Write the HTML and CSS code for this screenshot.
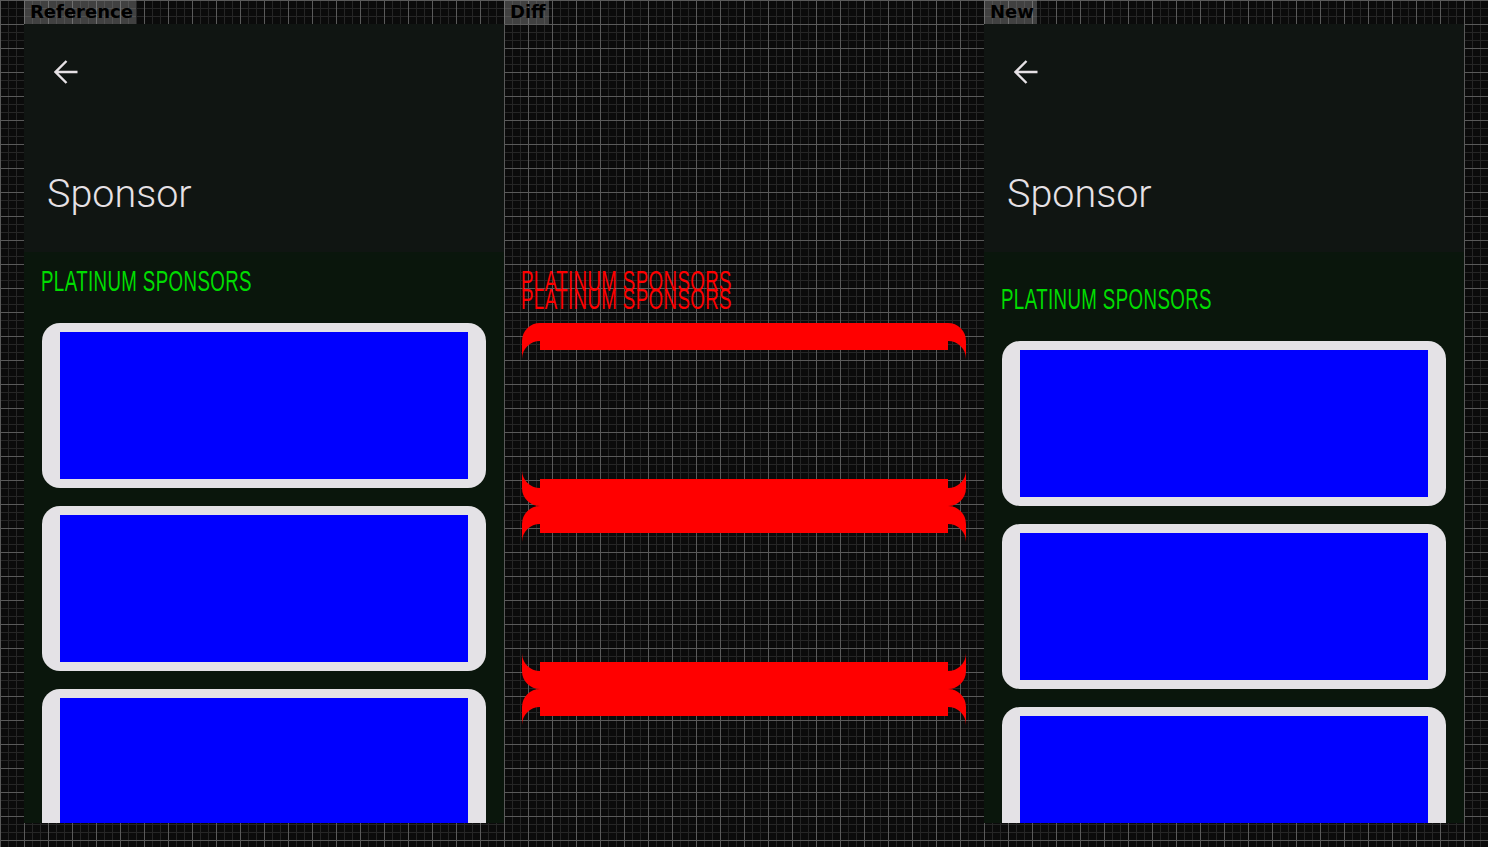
FILE: index.html
```html
<!DOCTYPE html>
<html lang="en">
<head>
<meta charset="utf-8">
<title>Sponsor – comparison</title>
<link rel="stylesheet" href="styles.css">
</head>
<body>
<div class="stage">
  <div class="col">
    <div class="label">Reference</div>
    <div class="panel app">
      <header class="app-header">
        <svg class="back" viewBox="0 0 24 24" aria-hidden="true"><path d="M23.5 12H1.5M12.5 1L1.5 12l11 11" fill="none" stroke="currentColor" stroke-width="2.4"/></svg>
        <h1 class="title">Sponsor</h1>
      </header>
      <section class="sponsors">
        <h2 class="tier">PLATINUM SPONSORS</h2>
        <div class="cards">
          <div class="card"><div class="card-logo"></div></div>
          <div class="card"><div class="card-logo"></div></div>
          <div class="card"><div class="card-logo"></div></div>
        </div>
      </section>
    </div>
  </div>

  <div class="col">
    <div class="label">Diff</div>
    <div class="panel diff">
      <svg class="diff-shapes" width="480" height="799" viewBox="0 0 480 799" aria-hidden="true">
        <path fill="#ff0000" fill-rule="evenodd" d="
          M36,299 H444 A18,18 0 0 1 462,317 V446 A18,18 0 0 1 444,464 H36 A18,18 0 0 1 18,446 V317 A18,18 0 0 1 36,299 Z
          M36,482 H444 A18,18 0 0 1 462,500 V629 A18,18 0 0 1 444,647 H36 A18,18 0 0 1 18,629 V500 A18,18 0 0 1 36,482 Z
          M36,665 H444 A18,18 0 0 1 462,683 V812 A18,18 0 0 1 444,830 H36 A18,18 0 0 1 18,812 V683 A18,18 0 0 1 36,665 Z
          M36,317 H444 A18,18 0 0 1 462,335 V464 A18,18 0 0 1 444,482 H36 A18,18 0 0 1 18,464 V335 A18,18 0 0 1 36,317 Z
          M36,500 H444 A18,18 0 0 1 462,518 V647 A18,18 0 0 1 444,665 H36 A18,18 0 0 1 18,647 V518 A18,18 0 0 1 36,500 Z
          M36,683 H444 A18,18 0 0 1 462,701 V830 A18,18 0 0 1 444,848 H36 A18,18 0 0 1 18,830 V701 A18,18 0 0 1 36,683 Z"/>
        <path fill="#ff0000" fill-rule="evenodd" d="
          M36,308 H444 V455 H36 Z
          M36,491 H444 V638 H36 Z
          M36,674 H444 V821 H36 Z
          M36,326 H444 V473 H36 Z
          M36,509 H444 V656 H36 Z
          M36,692 H444 V839 H36 Z"/>
      </svg>
      <div class="diff-text">
        <span class="tier tier--diff">PLATINUM SPONSORS</span>
        <span class="tier tier--diff tier--shifted">PLATINUM SPONSORS</span>
      </div>
    </div>
  </div>

  <div class="col">
    <div class="label">New</div>
    <div class="panel app app--new">
      <header class="app-header">
        <svg class="back" viewBox="0 0 24 24" aria-hidden="true"><path d="M23.5 12H1.5M12.5 1L1.5 12l11 11" fill="none" stroke="currentColor" stroke-width="2.4"/></svg>
        <h1 class="title">Sponsor</h1>
      </header>
      <section class="sponsors">
        <h2 class="tier">PLATINUM SPONSORS</h2>
        <div class="cards">
          <div class="card"><div class="card-logo"></div></div>
          <div class="card"><div class="card-logo"></div></div>
          <div class="card"><div class="card-logo"></div></div>
        </div>
      </section>
    </div>
  </div>
</div>
</body>
</html>
```

FILE: styles.css
```css
html, body {
  margin: 0;
  padding: 0;
}

body {
  width: 1488px;
  height: 847px;
  overflow: hidden;
  background-color: #0b0b0b;
  background-image:
    linear-gradient(to right, #5a5a5a 1px, transparent 1px),
    linear-gradient(to bottom, #5a5a5a 1px, transparent 1px),
    linear-gradient(to right, #262626 1px, transparent 1px),
    linear-gradient(to bottom, #262626 1px, transparent 1px);
  background-size: 24px 24px, 24px 24px, 8px 8px, 8px 8px;
}

.stage {
  display: flex;
  padding-left: 24px;
}

.col {
  width: 480px;
  display: flex;
  flex-direction: column;
  align-items: flex-start;
}

.label {
  height: 24px;
  box-sizing: border-box;
  padding: 0 3px 0 6px;
  font: bold 18px/24px "DejaVu Sans", sans-serif;
  color: #000;
  background: rgba(140, 140, 140, 0.42);
}

.panel {
  align-self: stretch;
  width: 480px;
  height: 799px;
  overflow: hidden;
  position: relative;
}

/* app screen */
.app {
  background: #0a160c;
  display: flex;
  flex-direction: column;
}

.app-header {
  flex-shrink: 0;
  height: 228px;
  box-sizing: border-box;
  padding: 36px 0 0 22px;
  background: #101512;
  color: #e6e1e5;
}

.back {
  display: block;
  width: 24px;
  height: 24px;
  margin-left: 8px;
}

.title {
  margin: 88px 0 0 1px;
  font: 300 39.5px/44px Roboto, "Liberation Sans", sans-serif;
  color: #e6e1e5;
}

.sponsors {
  padding: 14px 18px 0;
  display: flex;
  flex-direction: column;
}

.app--new .sponsors {
  padding-top: 32px;
}

.tier {
  display: block;
  margin: 0 0 27px -1px;
  font: normal 29px/30px "Liberation Sans", Arial, sans-serif;
  color: #00dd00;
  white-space: nowrap;
  letter-spacing: 0.6px;
  transform: scaleX(0.645);
  transform-origin: left top;
}

.cards {
  display: flex;
  flex-direction: column;
  gap: 18px;
}

.card {
  flex-shrink: 0;
  height: 165px;
  box-sizing: border-box;
  padding: 9px 18px;
  background: #e4e2e6;
  border-radius: 18px;
}

.card-logo {
  height: 100%;
  background: #0000ff;
}

/* diff panel */
.diff-shapes {
  position: absolute;
  left: 0;
  top: 0;
}

.diff-text {
  position: relative;
  margin-top: 242px;
  height: 48px;
}

.tier--diff {
  position: absolute;
  left: 17px;
  top: 0;
  margin: 0;
  color: #ff0000;
}

.tier--shifted {
  top: 18px;
}
```
